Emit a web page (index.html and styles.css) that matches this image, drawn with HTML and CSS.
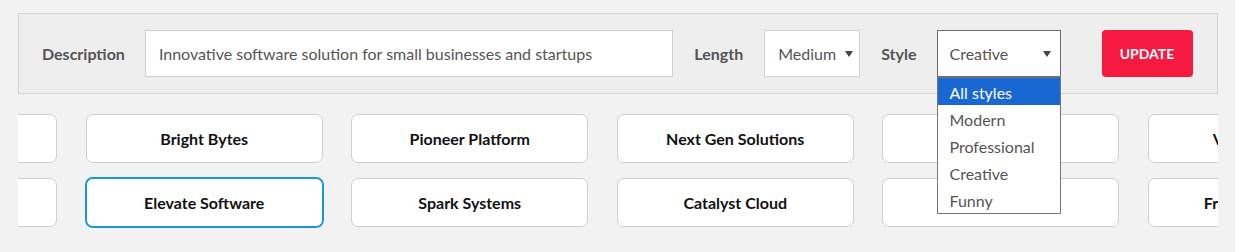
FILE: index.html
```html
<!DOCTYPE html>
<html lang="en">
<head>
<meta charset="utf-8">
<title>Name generator</title>
<link rel="stylesheet" href="styles.css">
</head>
<body>
<div class="wrap">
  <form class="panel">
    <label class="lbl">Description</label>
    <div class="input">Innovative software solution for small businesses and startups</div>
    <label class="lbl lbl-len">Length</label>
    <div class="select select-len"><span>Medium</span><i class="arrow"></i></div>
    <label class="lbl lbl-style">Style</label>
    <div class="select select-style"><span>Creative</span><i class="arrow"></i>
      <ul class="dropdown">
        <li class="active">All styles</li>
        <li>Modern</li>
        <li>Professional</li>
        <li>Creative</li>
        <li>Funny</li>
      </ul>
    </div>
    <button type="button" class="btn">Update</button>
  </form>
  <div class="cards">
    <div class="row">
      <div class="card">Smart Solutions</div>
      <div class="card">Bright Bytes</div>
      <div class="card">Pioneer Platform</div>
      <div class="card">Next Gen Solutions</div>
      <div class="card">Code Craft</div>
      <div class="card">Visionary Vault</div>
    </div>
    <div class="row">
      <div class="card">Growth Grid</div>
      <div class="card selected">Elevate Software</div>
      <div class="card">Spark Systems</div>
      <div class="card">Catalyst Cloud</div>
      <div class="card">Nova Labs</div>
      <div class="card">Frontier Software</div>
    </div>
  </div>
</div>
</body>
</html>
```
FILE: styles.css
```css
* { box-sizing: border-box; }
html, body { margin: 0; padding: 0; }
body {
  background: #f2f2f2;
  font-family: Lato, "Open Sans", "Liberation Sans", sans-serif;
  color: #555;
}
.wrap {
  width: 1200px;
  margin: 13px auto 0;
}
.panel {
  display: flex;
  align-items: center;
  gap: 20px;
  padding: 16px 24px 16px 23.5px;
  border: 1px solid #d4d4d4;
  background: #eeeeee;
  margin: 0;
}
.lbl {
  font-weight: 700;
  font-size: 16px;
  color: #555;
  white-space: nowrap;
}
.lbl-len, .lbl-style { margin-left: 1px; }
.input {
  flex: 1;
  height: 47px;
  background: #fff;
  border: 1px solid #cfcfcf;
  padding: 0 13px;
  display: flex;
  align-items: center;
  font-size: 16px;
  color: #555;
  white-space: nowrap;
}
.select {
  position: relative;
  height: 47px;
  background: #fff;
  border: 1px solid #d2d2d2;
  display: flex;
  align-items: center;
  padding-left: 13px;
  font-size: 16px;
  color: #555;
}
.select-len { width: 96px; margin-left: 1px; }
.select-style { width: 124px; border-color: #6b6b6b; padding-left: 12px; }
.arrow {
  position: absolute;
  right: 9px;
  top: 20px;
  width: 0;
  height: 0;
  border-left: 4px solid transparent;
  border-right: 4px solid transparent;
  border-top: 6px solid #444;
}
.select-len .arrow { right: 6px; }
.dropdown {
  position: absolute;
  z-index: 10;
  top: calc(100% + 1px);
  left: -1px;
  right: -1px;
  margin: 0;
  padding: 0;
  list-style: none;
  background: #fff;
  border: 1px solid #767676;
}
.dropdown li {
  height: 27px;
  line-height: 29px;
  padding-left: 12px;
  font-size: 16px;
  color: #555;
}
.dropdown li.active {
  background: #1967d2;
  color: #fff;
}
.btn {
  width: 91px;
  height: 47px;
  margin-left: 21px;
  border: none;
  border-radius: 4px;
  background: #f5193f;
  color: #fff;
  font-family: Lato, "Liberation Sans", sans-serif;
  font-weight: 700;
  font-size: 14px;
  text-transform: uppercase;
  padding: 0;
}
.cards {
  margin-top: 19px;
  overflow: hidden;
  display: flex;
  flex-direction: column;
  gap: 15px;
  padding: 1px 0;
}
.row {
  display: flex;
  gap: 28.5px;
  margin-left: -197.3px;
}
.card {
  flex: 0 0 237px;
  height: 49px;
  background: #fff;
  border: 1px solid #cfcfcf;
  border-radius: 7px;
  display: flex;
  align-items: center;
  justify-content: center;
  font-weight: 700;
  font-size: 16px;
  color: #111;
  white-space: nowrap;
}
.card.selected {
  border-color: #1a96d6;
  box-shadow: 0 0 0 1px #1a96d6;
}
```
